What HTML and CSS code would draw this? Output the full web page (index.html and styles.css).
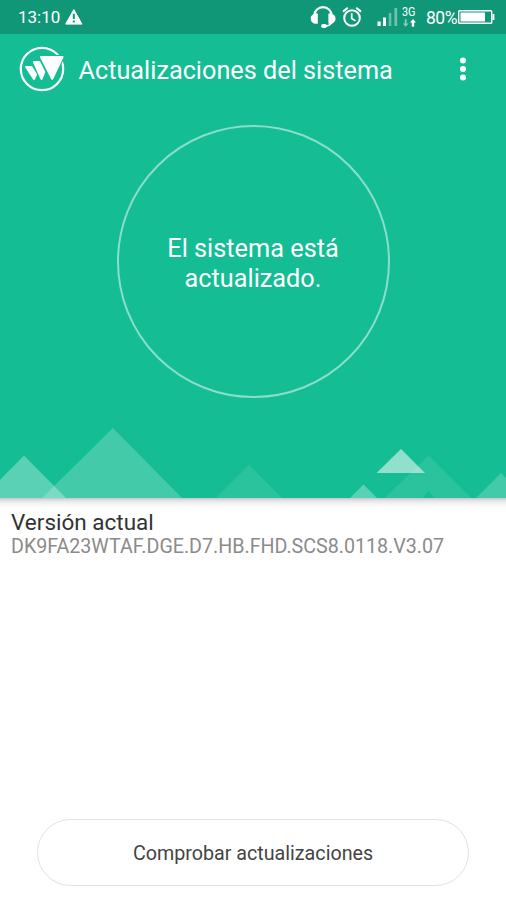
FILE: index.html
```html
<!DOCTYPE html>
<html lang="es">
<head>
<meta charset="utf-8">
<title>Actualizaciones del sistema</title>
<link rel="stylesheet" href="styles.css">
</head>
<body>
<div class="screen">
  <div class="status">
    <span class="clock">13:10</span>
    <svg class="warn" width="20" height="18" viewBox="64 8 20 18"><path d="M73.8 9.6 82 24.1H65.7Z" fill="#fff" stroke="#fff" stroke-width="1" stroke-linejoin="round"/><path d="M73.8 13.8v5.2M73.8 20.6v2" stroke="#109778" stroke-width="2"/></svg>
    <svg class="signals" width="114" height="34" viewBox="308 0 114 34">
      <g fill="none" stroke="#fff">
        <path d="M314.500 16V15a8.500 7.800 0 0 1 17 0V16" stroke-width="2.200"/>
        <path d="M331.5 22.5c-1 2.4-3 3.400-6.5 3.600" stroke-width="1.800"/>
        <circle cx="352" cy="18" r="7.800" stroke-width="2"/>
        <path d="M351.700 13.300v5.200l3.800 2.400" stroke-width="1.700"/>
        <path d="m343 11.600 4.800-3.900M361 11.600l-4.800-3.900" stroke-width="2"/>
      </g>
      <g fill="#fff">
        <path d="M317.800 13.400v10.400h-2a5.200 5.200 0 0 1 0-10.400ZM328.400 13.400v10.400h2a5.200 5.200 0 0 0 0-10.400Z"/>
        <rect x="321.200" y="24" width="5.600" height="4" rx="1.800"/>
        <path d="M377.500 21.500h3.200V26h-3.200ZM383 17.500h3v8.500h-3Z"/>
        <path d="M388.800 13h2.500v13h-2.500ZM394.400 8h2.800v18h-2.800Z" opacity=".4"/>
        <path d="M404.800 19h1.800v4.500h2l-2.900 3.300-2.900-3.300h2Z" opacity=".5"/>
        <path d="m413 19 3 3.500h-1.800v4.300h-2.400v-4.300H410Z"/>
        <text class="net" x="402" y="15.700" textLength="13.500" lengthAdjust="spacingAndGlyphs">3G</text>
      </g>
    </svg>
    <span class="percent">80%</span>
    <svg class="battery" width="38" height="18" viewBox="457 8 38 18"><rect x="458.700" y="10.700" width="33" height="12.600" rx=".8" fill="none" stroke="#fff" stroke-width="1.400"/><path d="M460.500 12.500h24.500v9h-24.500ZM492.400 14h2v6h-2Z" fill="#fff"/></svg>
  </div>
  <header class="header">
    <svg class="logo" width="48" height="48" viewBox="18 45 48 48">
      <circle cx="42" cy="69" r="21.200" fill="none" stroke="#fff" stroke-width="2.200"/>
      <path d="M41 57H62.700L52.200 78.700Z" fill="#14bd94" stroke="#14bd94" stroke-width="4" stroke-linejoin="round"/>
      <g fill="#fff" stroke="#fff" stroke-width="2.100" stroke-linejoin="round"><path d="M41 57H62.500L52.200 78.700Z"/><path d="M34 62h5.200l5 10-2.700 6.800Z"/><path d="M26.200 67h5.200l4.600 7.600-2 4.200Z"/></g>
    </svg>
    <h1 class="title">Actualizaciones del sistema</h1>
    <svg class="menu" width="10" height="26" viewBox="0 0 10 26" fill="#fff"><circle cx="5" cy="4.500" r="3"/><circle cx="5" cy="13" r="3"/><circle cx="5" cy="21.500" r="3"/></svg>
  </header>
  <section class="hero">
    <div class="ring"><p class="state">El sistema está<br>actualizado.</p></div>
    <svg class="peaks" width="506" height="78" viewBox="0 420 506 78" fill="#fff">
      <path d="M-18 498 24 455.500 66 498Z" opacity=".3"/>
      <path d="M42 498 113 428 182 498Z" opacity=".2"/>
      <path d="m216 498 33-33 33 33Z" opacity=".1"/>
      <path d="m376.500 473 24.500-24 24 24Z" opacity=".53"/>
      <path d="m385 498 43.500-42.500L471 498h-36.500l-6-7-6 7Z" opacity=".1"/>
      <path d="m350 498 13.500-13.500L377 498Z" opacity=".3"/>
      <path d="m476 498 25-25 25 25Z" opacity=".2"/>
    </svg>
  </section>
  <main class="main">
    <h2 class="label">Versión actual</h2>
    <p class="version">DK9FA23WTAF.DGE.D7.HB.FHD.SCS8.0118.V3.07</p>
    <button class="check">Comprobar actualizaciones</button>
  </main>
</div>
</body>
</html>
```
FILE: styles.css
```css
* { box-sizing: border-box; }
body { margin: 0; font-family: Roboto, "Liberation Sans", sans-serif; background: #fff; }
h1, h2, p { margin: 0; font-weight: 400; }
svg { display: block; flex: none; }
.screen { width: 506px; height: 900px; display: flex; flex-direction: column; overflow: hidden; }
.status { height: 34px; flex: none; display: flex; align-items: center; padding: 0 11px 0 18px; background: #109778; color: #fff; }
.clock { font-size: 17px; width: 46px; white-space: nowrap; }
.signals { margin-left: 224px; }
.net { font-size: 12px; }
.percent { font-size: 17.5px; width: 31px; margin-left: 4px; padding-top: 1px; white-space: nowrap; letter-spacing: -.5px; }
.header { height: 70px; flex: none; display: flex; align-items: center; padding: 0 38px 0 18px; background: #14bd94; color: #fff; }
.title { font-size: 25.25px; line-height: 34px; margin-left: 12.5px; padding-top: 4px; white-space: nowrap; }
.menu { margin-left: auto; }
.hero { height: 394px; flex: none; display: flex; flex-direction: column; align-items: center; justify-content: space-between; padding-top: 21px; background: #14bd94; color: #fff; }
.ring { width: 273px; height: 273px; border: 2px solid #8adeca; border-radius: 50%; display: flex; align-items: center; justify-content: center; }
.state { font-size: 25.3px; line-height: 30px; text-align: center; padding-top: 4px; }
.main { flex: 1; display: flex; flex-direction: column; padding: 11px 37px 14px 11px; background: linear-gradient(#c4c4c4 0, #dedede 2px, #f1f1f1 5px, #fff 10px); }
.label { font-size: 22.5px; line-height: 27px; color: #333; }
.version { font-size: 19.65px; line-height: 20px; padding-top: 1px; color: #8b8b8b; white-space: nowrap; }
.check { margin: auto 0 0 26px; height: 67px; border: 1px solid #e2e2e2; border-radius: 34px; background: #fff; color: #444; font: 400 19.7px Roboto, "Liberation Sans", sans-serif; padding: 2px 0 0; }
```
